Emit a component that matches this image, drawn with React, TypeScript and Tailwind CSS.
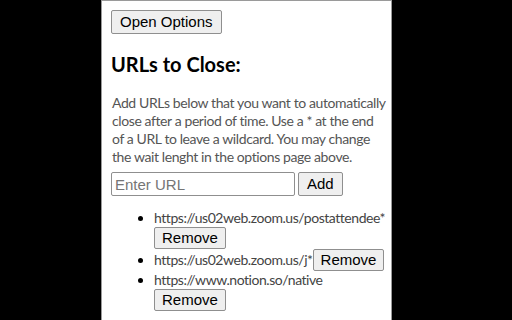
import React, { useState } from 'react';

const urls = [
  'https://us02web.zoom.us/postattendee*',
  'https://us02web.zoom.us/j*',
  'https://www.notion.so/native',
];

const btn =
  "border border-[#8f8f8f] bg-[#efefef] rounded-[2px] px-[7px] text-[15px] leading-[20px] text-black font-['Liberation_Sans',Arial,sans-serif]";

export default function App() {
  const [items] = useState(urls);

  return (
    <div className="w-[512px] h-[320px] bg-black overflow-hidden">
      <div className="ml-[101px] w-[291px] h-[320px] bg-white border-x border-t border-[#9a9a9a] pl-[9px] pr-[4px] pt-[8px] font-['Lato','Noto_Sans',sans-serif]">
        <button className={`${btn} px-[8px] h-[24px]`}>Open Options</button>

        <h2 className="mt-[16px] text-[20px] leading-[28px] font-bold text-black">URLs to Close:</h2>

        <p className="mt-[16px] pl-[1px] whitespace-nowrap text-[14px] tracking-[-0.4px] leading-[18px] text-[#555]">
          Add URLs below that you want to automatically
          <br />
          close after a period of time. Use a * at the end
          <br />
          of a URL to leave a wildcard. You may change
          <br />
          the wait lenght in the options page above.
        </p>

        <div className="mt-[6px] flex items-center gap-[3px]">
          <input
            placeholder="Enter URL"
            className="w-[184px] h-[24px] border border-[#8f8f8f] rounded-[2px] px-[3px] text-[15px] font-['Liberation_Sans',Arial,sans-serif] placeholder:text-[#757575] outline-none"
          />
          <button className={`${btn} px-[8px] h-[24px]`}>Add</button>
        </div>

        <ul className="mt-[13px] pl-[43px] list-disc text-[14px] tracking-[-0.45px] leading-[18px] text-[#444] marker:text-black">
          {items.map((u) => (
            <li key={u}>
              {u}
              <button className={`${btn} h-[22px] leading-[18px] tracking-normal`}>Remove</button>
            </li>
          ))}
        </ul>
      </div>
    </div>
  );
}
